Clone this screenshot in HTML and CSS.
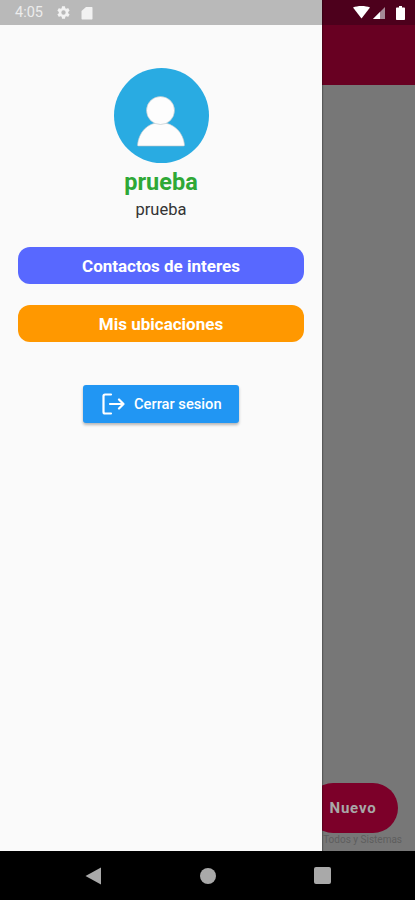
FILE: index.html
```html
<!DOCTYPE html>
<html lang="en">
<head>
  <meta charset="UTF-8">
  <meta name="viewport" content="width=device-width, initial-scale=1.0">
  <title>Perfil</title>
  <link rel="stylesheet" href="styles.css">
</head>
<body>
  <div class="screen">
    <div class="app">
      <aside class="drawer">
        <div class="status-left">
          <span class="status-time">4:05</span>
          <svg class="status-icon" width="15" height="15" viewBox="0 0 24 24" fill="#f2f2f2"><path d="M19.4 13c.04-.32.1-.66.1-1s-.06-.68-.1-1l2.100-1.650c.2-.15.25-.42.12-.64l-2-3.460c-.12-.22-.39-.3-.61-.22l-2.490 1c-.52-.4-1.080-.73-1.690-.98l-.38-2.650A.49.49 0 0 0 14 2h-4c-.25 0-.46.18-.49.42l-.38 2.650c-.61.25-1.170.59-1.690.98l-2.490-1c-.23-.09-.49 0-.61.22l-2 3.460c-.13.22-.07.49.12.64L4.570 11c-.04.32-.07.66-.07 1s.03.68.07 1l-2.110 1.650c-.19.15-.25.42-.12.64l2 3.460c.12.22.39.3.61.22l2.490-1c.52.4 1.080.73 1.690.98l.38 2.650c.03.24.24.42.49.42h4c.25 0 .46-.18.49-.42l.38-2.650c.61-.25 1.170-.59 1.690-.98l2.490 1c.23.09.49 0 .61-.22l2-3.460c.12-.22.07-.49-.12-.64L19.400 13zM12 15.500a3.500 3.500 0 1 1 0-7 3.500 3.500 0 0 1 0 7z"/></svg>
          <svg class="status-icon sd-icon" width="12" height="14" viewBox="0 0 12 14" fill="#f2f2f2"><path d="M5 1h5.500c.6 0 1 .4 1 1v10.500c0 .6-.4 1-1 1h-9c-.6 0-1-.4-1-1V5z"/></svg>
        </div>

        <div class="profile">
          <div class="avatar">
            <svg width="95" height="95" viewBox="0 0 95 95">
              <path d="M23.500 77c1-12 9.500-22.500 23-22.500S69.500 65 70.500 77c0 .6-.4 1-1 1h-45c-.6 0-1-.4-1-1z" fill="#fdfdfd" stroke="#b9c4ca" stroke-width="0.600"/>
              <circle cx="46.500" cy="42.500" r="14" fill="#fdfdfd" stroke="#b9c4ca" stroke-width="0.600"/>
            </svg>
          </div>
          <h2 class="profile-name">prueba</h2>
          <p class="profile-user">prueba</p>
        </div>

        <div class="drawer-actions">
          <a href="#" class="pill-btn pill-blue">Contactos de interes</a>
          <a href="#" class="pill-btn pill-orange">Mis ubicaciones</a>
        </div>

        <a href="#" class="logout-btn">
          <svg width="24" height="24" viewBox="0 0 24 24" fill="none" stroke="#fff" stroke-width="2.200" stroke-linecap="round" stroke-linejoin="round">
            <path d="M10 2.500H4A1.500 1.500 0 0 0 2.500 4v16A1.500 1.500 0 0 0 4 21.500h6"/>
            <path d="M9 12h13.500M18 7.500l4.500 4.500-4.500 4.500"/>
          </svg>
          <span>Cerrar sesion</span>
        </a>
      </aside>

      <div class="behind">
        <div class="status-right">
          <svg width="17" height="13" viewBox="0 0 17 13" fill="#fff"><path d="M0 1.500C2.300.5 5.300 0 8.500 0s6.200.5 8.500 1.500L8.500 12.500z"/></svg>
          <svg width="12" height="12" viewBox="0 0 12 12"><path d="M12 0v12H0z" fill="#a58a97"/><path d="M7 5v7H0z" fill="#fff"/></svg>
          <svg class="battery" width="9" height="14" viewBox="0 0 9 14" fill="#fff"><path d="M3 0h3v1.500h2c.6 0 1 .4 1 1V13c0 .6-.4 1-1 1H1c-.6 0-1-.4-1-1V2.500c0-.6.4-1 1-1h2z"/></svg>
        </div>
        <div class="app-header"></div>
        <div class="behind-body">
          <div class="fab-row"><span class="fab">Nuevo</span></div>
          <p class="footer-note">Todos y Sistemas</p>
        </div>
      </div>
    </div>

    <nav class="nav-bar">
      <svg width="17" height="18" viewBox="0 0 17 18" fill="#a9a9a9"><path d="M16 0.500v17L0.500 9z"/></svg>
      <span class="nav-home"></span>
      <span class="nav-recent"></span>
    </nav>
  </div>
</body>
</html>
```

FILE: styles.css
```css
* {
  box-sizing: border-box;
  margin: 0;
  padding: 0;
}

body {
  font-family: Roboto, "Liberation Sans", sans-serif;
  background: #000;
  width: 415px;
  height: 900px;
  overflow: hidden;
}

.screen {
  display: flex;
  flex-direction: column;
  height: 900px;
}

.app {
  display: flex;
  flex: 1;
  min-height: 0;
}

/* Drawer */
.drawer {
  width: 322px;
  background: #fafafa;
  display: flex;
  flex-direction: column;
  align-items: center;
  box-shadow: 1px 0 1px rgba(0, 0, 0, 0.25);
  position: relative;
  z-index: 1;
}

.status-left {
  width: 100%;
  height: 25px;
  background: #b9b9b9;
  display: flex;
  align-items: center;
  padding-left: 15px;
  color: #ececec;
  flex-shrink: 0;
}

.status-time {
  font-size: 14.500px;
  width: 41px;
}

.sd-icon {
  margin-left: 10px;
}

.profile {
  display: flex;
  flex-direction: column;
  align-items: center;
  margin-top: 43px;
}

.avatar {
  width: 95px;
  height: 95px;
  border-radius: 50%;
  background: #29abe2;
}

.avatar svg {
  display: block;
}

.profile-name {
  font-size: 23.500px;
  line-height: 26px;
  font-weight: 700;
  color: #2ea836;
  margin-top: 6px;
}

.profile-user {
  font-size: 16.500px;
  line-height: 18px;
  color: #333;
  margin-top: 6px;
}

.drawer-actions {
  width: 100%;
  padding: 0 18px;
  display: flex;
  flex-direction: column;
  gap: 21px;
  margin-top: 28px;
}

.pill-btn {
  height: 37px;
  border-radius: 12px;
  display: flex;
  align-items: center;
  justify-content: center;
  color: #fff;
  font-size: 17px;
  font-weight: 700;
  text-decoration: none;
}

.pill-blue {
  background: #5868ff;
}

.pill-orange {
  background: #ff9800;
}

.logout-btn {
  width: 156px;
  height: 38px;
  margin-top: 43px;
  background: #2196f3;
  border-radius: 3px;
  box-shadow: 0 2px 3px rgba(0, 0, 0, 0.28);
  display: flex;
  align-items: center;
  padding-left: 18px;
  gap: 9px;
  color: #fff;
  font-size: 14.700px;
  font-weight: 500;
  text-decoration: none;
}

/* Dimmed page behind the drawer */
.behind {
  flex: 1;
  min-width: 0;
  display: flex;
  flex-direction: column;
}

.status-right {
  height: 25px;
  background: #4d001c;
  display: flex;
  align-items: center;
  padding-left: 31px;
  gap: 3px;
}

.battery {
  margin-left: 8px;
}

.app-header {
  height: 60px;
  background: #680022;
}

.behind-body {
  flex: 1;
  background: #777;
  display: flex;
  flex-direction: column;
  justify-content: flex-end;
  overflow: hidden;
}

.fab-row {
  display: flex;
  justify-content: flex-end;
  padding-right: 17px;
}

.fab {
  width: 90px;
  flex-shrink: 0;
  height: 50px;
  border-radius: 25px;
  background: #7c0029;
  color: #a8a8a8;
  font-size: 15px;
  font-weight: 700;
  letter-spacing: 0.8px;
  display: flex;
  align-items: center;
  justify-content: center;
}

.footer-note {
  font-size: 10px;
  line-height: 12px;
  color: #5e5e5e;
  white-space: nowrap;
  text-align: right;
  padding-right: 13px;
  margin-top: 1px;
  margin-bottom: 5px;
}

/* Android nav bar */
.nav-bar {
  height: 49px;
  background: #000;
  display: flex;
  align-items: center;
  padding-left: 85px;
  flex-shrink: 0;
}

.nav-home {
  width: 16px;
  height: 16px;
  border-radius: 50%;
  background: #a9a9a9;
  margin-left: 98px;
}

.nav-recent {
  width: 17px;
  height: 17px;
  border-radius: 2px;
  background: #a9a9a9;
  margin-left: 98px;
}
```
